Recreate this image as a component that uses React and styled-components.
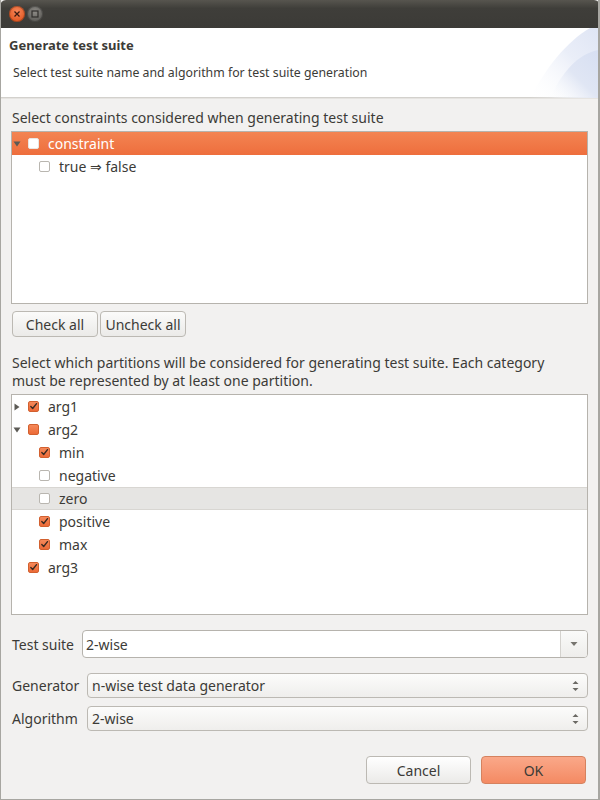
import styled, { createGlobalStyle } from "styled-components";

const GlobalStyle = createGlobalStyle`
  html, body {
    margin: 0;
    padding: 0;
    background: #f2f1f0;
  }
  body {
    font-family: "Noto Sans", "DejaVu Sans", sans-serif;
    font-size: 14px;
    color: #3c3b37;
  }
`;

const constraints = [
  { label: "constraint", level: 0, expander: "down", state: "off", selected: true },
  { label: "true ⇒ false", level: 1, state: "off" },
];

const partitions = [
  { label: "arg1", level: 0, expander: "right", state: "on" },
  { label: "arg2", level: 0, expander: "down", state: "mixed" },
  { label: "min", level: 1, state: "on" },
  { label: "negative", level: 1, state: "off" },
  { label: "zero", level: 1, state: "off", hover: true },
  { label: "positive", level: 1, state: "on" },
  { label: "max", level: 1, state: "on" },
  { label: "arg3", level: 0, state: "on" },
];

function Expander({ dir }) {
  return (
    <ExpanderBox>
      {dir === "down" && (
        <svg width="8" height="8" viewBox="0 0 8 8">
          <path d="M0.5 1.5 L7.5 1.5 L4 6.5 Z" fill="#5c5a55" />
        </svg>
      )}
      {dir === "right" && (
        <svg width="8" height="8" viewBox="0 0 8 8">
          <path d="M1.5 0.5 L6.5 4 L1.5 7.5 Z" fill="#5c5a55" />
        </svg>
      )}
    </ExpanderBox>
  );
}

function Check({ state, selected }) {
  return (
    <CheckBox $state={state} $selected={selected}>
      {state === "on" && (
        <svg width="11" height="11" viewBox="0 0 11 11">
          <path
            d="M2.2 5.6 L4.5 8 L9.2 2"
            fill="none"
            stroke="#3a2a22"
            strokeWidth="1.7"
            strokeLinecap="round"
            strokeLinejoin="round"
          />
        </svg>
      )}
    </CheckBox>
  );
}

function Tree({ rows, height }) {
  return (
    <TreeBox $h={height}>
      {rows.map((r) => (
        <Row key={r.label} $selected={r.selected} $hover={r.hover}>
          <Indent $level={r.level} />
          <Expander dir={r.expander} />
          <Check state={r.state} selected={r.selected} />
          <RowLabel>{r.label}</RowLabel>
        </Row>
      ))}
    </TreeBox>
  );
}

function Spin() {
  return (
    <SpinArrows>
      <svg width="7" height="12" viewBox="0 0 7 12">
        <path d="M0.5 4 L6.5 4 L3.5 1 Z" fill="#6b6964" />
        <path d="M0.5 8 L6.5 8 L3.5 11 Z" fill="#6b6964" />
      </svg>
    </SpinArrows>
  );
}

export default function App() {
  return (
    <>
      <GlobalStyle />
      <Window>
        <TitleBar>
          <CloseBtn>
            <svg width="8" height="8" viewBox="0 0 8 8">
              <path d="M1.5 1.5 L6.5 6.5 M6.5 1.5 L1.5 6.5" stroke="#3b1a10" strokeWidth="1.3" />
            </svg>
          </CloseBtn>
          <MaxBtn>
            <svg width="8" height="8" viewBox="0 0 8 8">
              <rect x="1" y="1" width="6" height="6" fill="none" stroke="#2f2e2b" strokeWidth="1.2" />
            </svg>
          </MaxBtn>
        </TitleBar>
        <Header>
          <HeaderArt width="76" height="70" viewBox="0 0 76 70">
            <defs>
              <linearGradient id="ga" x1="0" y1="1" x2="1" y2="0">
                <stop offset="0" stopColor="#ffffff" stopOpacity="0" />
                <stop offset="0.6" stopColor="#eaeef8" />
                <stop offset="1" stopColor="#dfe5f4" />
              </linearGradient>
              <linearGradient id="gb" x1="0" y1="1" x2="1" y2="0">
                <stop offset="0" stopColor="#ffffff" stopOpacity="0" />
                <stop offset="0.5" stopColor="#e0e6f4" />
                <stop offset="1" stopColor="#d7dff2" />
              </linearGradient>
            </defs>
            <path d="M76 0 L68 0 C44 14 24 40 8 70 L76 70 Z" fill="url(#ga)" />
            <path d="M76 22 C56 26 40 44 28 70 L76 70 Z" fill="url(#gb)" />
          </HeaderArt>
          <Title>Generate test suite</Title>
          <Subtitle>Select test suite name and algorithm for test suite generation</Subtitle>
        </Header>
        <Body>
          <Label>Select constraints considered when generating test suite</Label>
          <Tree rows={constraints} height={173} />
          <ButtonRow>
            <SmallButton $w={86}>Check all</SmallButton>
            <SmallButton $w={86}>Uncheck all</SmallButton>
          </ButtonRow>
          <Label $top={17}>
            Select which partitions will be considered for generating test suite. Each category
            <br />
            must be represented by at least one partition.
          </Label>
          <Tree rows={partitions} height={221} />
          <FormRow $top={15}>
            <FieldLabel $w={70}>Test suite</FieldLabel>
            <Combo>
              <ComboText>2-wise</ComboText>
              <ComboButton>
                <svg width="8" height="6" viewBox="0 0 8 6">
                  <path d="M0.5 1 L7.5 1 L4 5 Z" fill="#77756f" />
                </svg>
              </ComboButton>
            </Combo>
          </FormRow>
          <FormRow $top={15}>
            <FieldLabel $w={75}>Generator</FieldLabel>
            <Select>
              <span>n-wise test data generator</span>
              <Spin />
            </Select>
          </FormRow>
          <FormRow $top={8}>
            <FieldLabel $w={75}>Algorithm</FieldLabel>
            <Select>
              <span>2-wise</span>
              <Spin />
            </Select>
          </FormRow>
          <Footer>
            <DialogButton>Cancel</DialogButton>
            <DialogButton $primary>OK</DialogButton>
          </Footer>
        </Body>
      </Window>
    </>
  );
}

const Window = styled.div`
  width: 600px;
  height: 800px;
  box-sizing: border-box;
  display: flex;
  flex-direction: column;
  background: #f2f1f0;
  border-left: 1px solid #a7a6a1;
  border-right: 2px solid #a7a6a1;
  border-bottom: 1px solid #a7a6a1;
  overflow: hidden;
`;

const TitleBar = styled.div`
  height: 28px;
  flex: none;
  display: flex;
  align-items: center;
  gap: 2px;
  padding-left: 9px;
  margin: 0 -2px 0 -1px;
  border-radius: 6px 6px 0 0;
  background: linear-gradient(#57554f, #3f3e3a 30%, #3c3b37);
`;

const RoundBtn = styled.div`
  width: 16px;
  height: 16px;
  border-radius: 50%;
  display: flex;
  align-items: center;
  justify-content: center;
  box-shadow: inset 0 0 0 1px rgba(0, 0, 0, 0.25);
`;

const CloseBtn = styled(RoundBtn)`
  background: radial-gradient(circle at 50% 35%, #f7875a, #e35b26 70%);
`;

const MaxBtn = styled(RoundBtn)`
  background: radial-gradient(circle at 50% 35%, #8d8b86, #5f5e5a 70%);
`;

const Header = styled.div`
  position: relative;
  flex: none;
  height: 70px;
  background: #ffffff;
  border-bottom: 1px solid #d3d1cd;
  box-shadow: 0 1px 0 #e6e4e1;
  padding: 8px 0 0 8px;
  box-sizing: border-box;
`;

const HeaderArt = styled.svg`
  position: absolute;
  right: 0;
  top: 0;
`;

const Title = styled.div`
  position: relative;
  font-weight: bold;
  font-size: 13px;
  line-height: 18px;
  color: #3c3b37;
`;

const Subtitle = styled.div`
  position: relative;
  margin: 10px 0 0 4px;
  font-size: 12.3px;
  line-height: 18px;
  color: #3c3b37;
`;

const Body = styled.div`
  flex: 1;
  display: flex;
  flex-direction: column;
  padding: 11px 10px 0 10px;
`;

const Label = styled.div`
  margin: ${(p) => p.$top || 0}px 0 4px 1px;
  line-height: 18px;
  color: #3c3b37;
`;

const TreeBox = styled.div`
  box-sizing: border-box;
  height: ${(p) => p.$h}px;
  background: #ffffff;
  border: 1px solid #b6b3ad;
`;

const Row = styled.div`
  height: 23px;
  display: flex;
  align-items: center;
  color: ${(p) => (p.$selected ? "#ffffff" : "#3c3b37")};
  background: ${(p) =>
    p.$selected
      ? "linear-gradient(#f38452, #ee6e3d)"
      : p.$hover
      ? "#e6e5e3"
      : "transparent"};
  border-top: ${(p) => (p.$hover ? "1px solid #d8d6d2" : "none")};
  border-bottom: ${(p) => (p.$hover ? "1px solid #d8d6d2" : "none")};
  box-sizing: border-box;
`;

const Indent = styled.div`
  width: ${(p) => p.$level * 11}px;
  flex: none;
`;

const ExpanderBox = styled.div`
  width: 14px;
  padding-left: 1px;
  box-sizing: border-box;
  flex: none;
  display: flex;
  align-items: center;
`;

const CheckBox = styled.div`
  width: 11px;
  height: 11px;
  margin-left: 2px;
  flex: none;
  border-radius: 2px;
  box-sizing: border-box;
  display: flex;
  align-items: center;
  justify-content: center;
  border: 1px solid
    ${(p) => (p.$state === "off" ? (p.$selected ? "#e9e6e2" : "#b9b6b0") : "#d2602f")};
  background: ${(p) =>
    p.$state === "off" ? "#ffffff" : "linear-gradient(#f5895a, #ec6a37)"};
`;

const RowLabel = styled.span`
  margin-left: 9px;
`;

const ButtonRow = styled.div`
  display: flex;
  gap: 2px;
  margin-top: 7px;
  margin-left: 1px;
`;

const SmallButton = styled.div`
  width: ${(p) => p.$w}px;
  height: 26px;
  box-sizing: border-box;
  display: flex;
  align-items: center;
  justify-content: center;
  border: 1px solid #bcb9b3;
  border-radius: 4px;
  background: linear-gradient(#fbfbfa, #ebeae8);
  color: #3c3b37;
`;

const FormRow = styled.div`
  display: flex;
  align-items: center;
  margin-top: ${(p) => p.$top}px;
  margin-left: 1px;
`;

const FieldLabel = styled.div`
  width: ${(p) => p.$w}px;
  flex: none;
  color: #3c3b37;
  white-space: nowrap;
`;

const Combo = styled.div`
  flex: 1;
  height: 28px;
  box-sizing: border-box;
  display: flex;
  border: 1px solid #b6b3ad;
  border-radius: 4px;
  background: #ffffff;
  overflow: hidden;
`;

const ComboText = styled.div`
  flex: 1;
  display: flex;
  align-items: center;
  padding-left: 3px;
`;

const ComboButton = styled.div`
  width: 26px;
  display: flex;
  align-items: center;
  justify-content: center;
  border-left: 1px solid #d4d2ce;
  background: linear-gradient(#fafaf9, #eeedeb);
`;

const Select = styled.div`
  flex: 1;
  height: 25px;
  box-sizing: border-box;
  display: flex;
  align-items: center;
  justify-content: space-between;
  padding: 0 8px 0 4px;
  border: 1px solid #bcb9b3;
  border-radius: 4px;
  background: linear-gradient(#fcfcfb, #efeeec);
`;

const SpinArrows = styled.div`
  display: flex;
  align-items: center;
`;

const Footer = styled.div`
  display: flex;
  justify-content: flex-end;
  gap: 10px;
  margin-top: 25px;
  padding-right: 2px;
`;

const DialogButton = styled.div`
  width: 105px;
  height: 28px;
  box-sizing: border-box;
  display: flex;
  align-items: center;
  justify-content: center;
  border-radius: 4px;
  border: 1px solid ${(p) => (p.$primary ? "#d5825f" : "#bcb9b3")};
  background: ${(p) =>
    p.$primary ? "linear-gradient(#faa889, #f48a63)" : "linear-gradient(#ffffff, #ebeae8)"};
  color: #3c3b37;
`;
